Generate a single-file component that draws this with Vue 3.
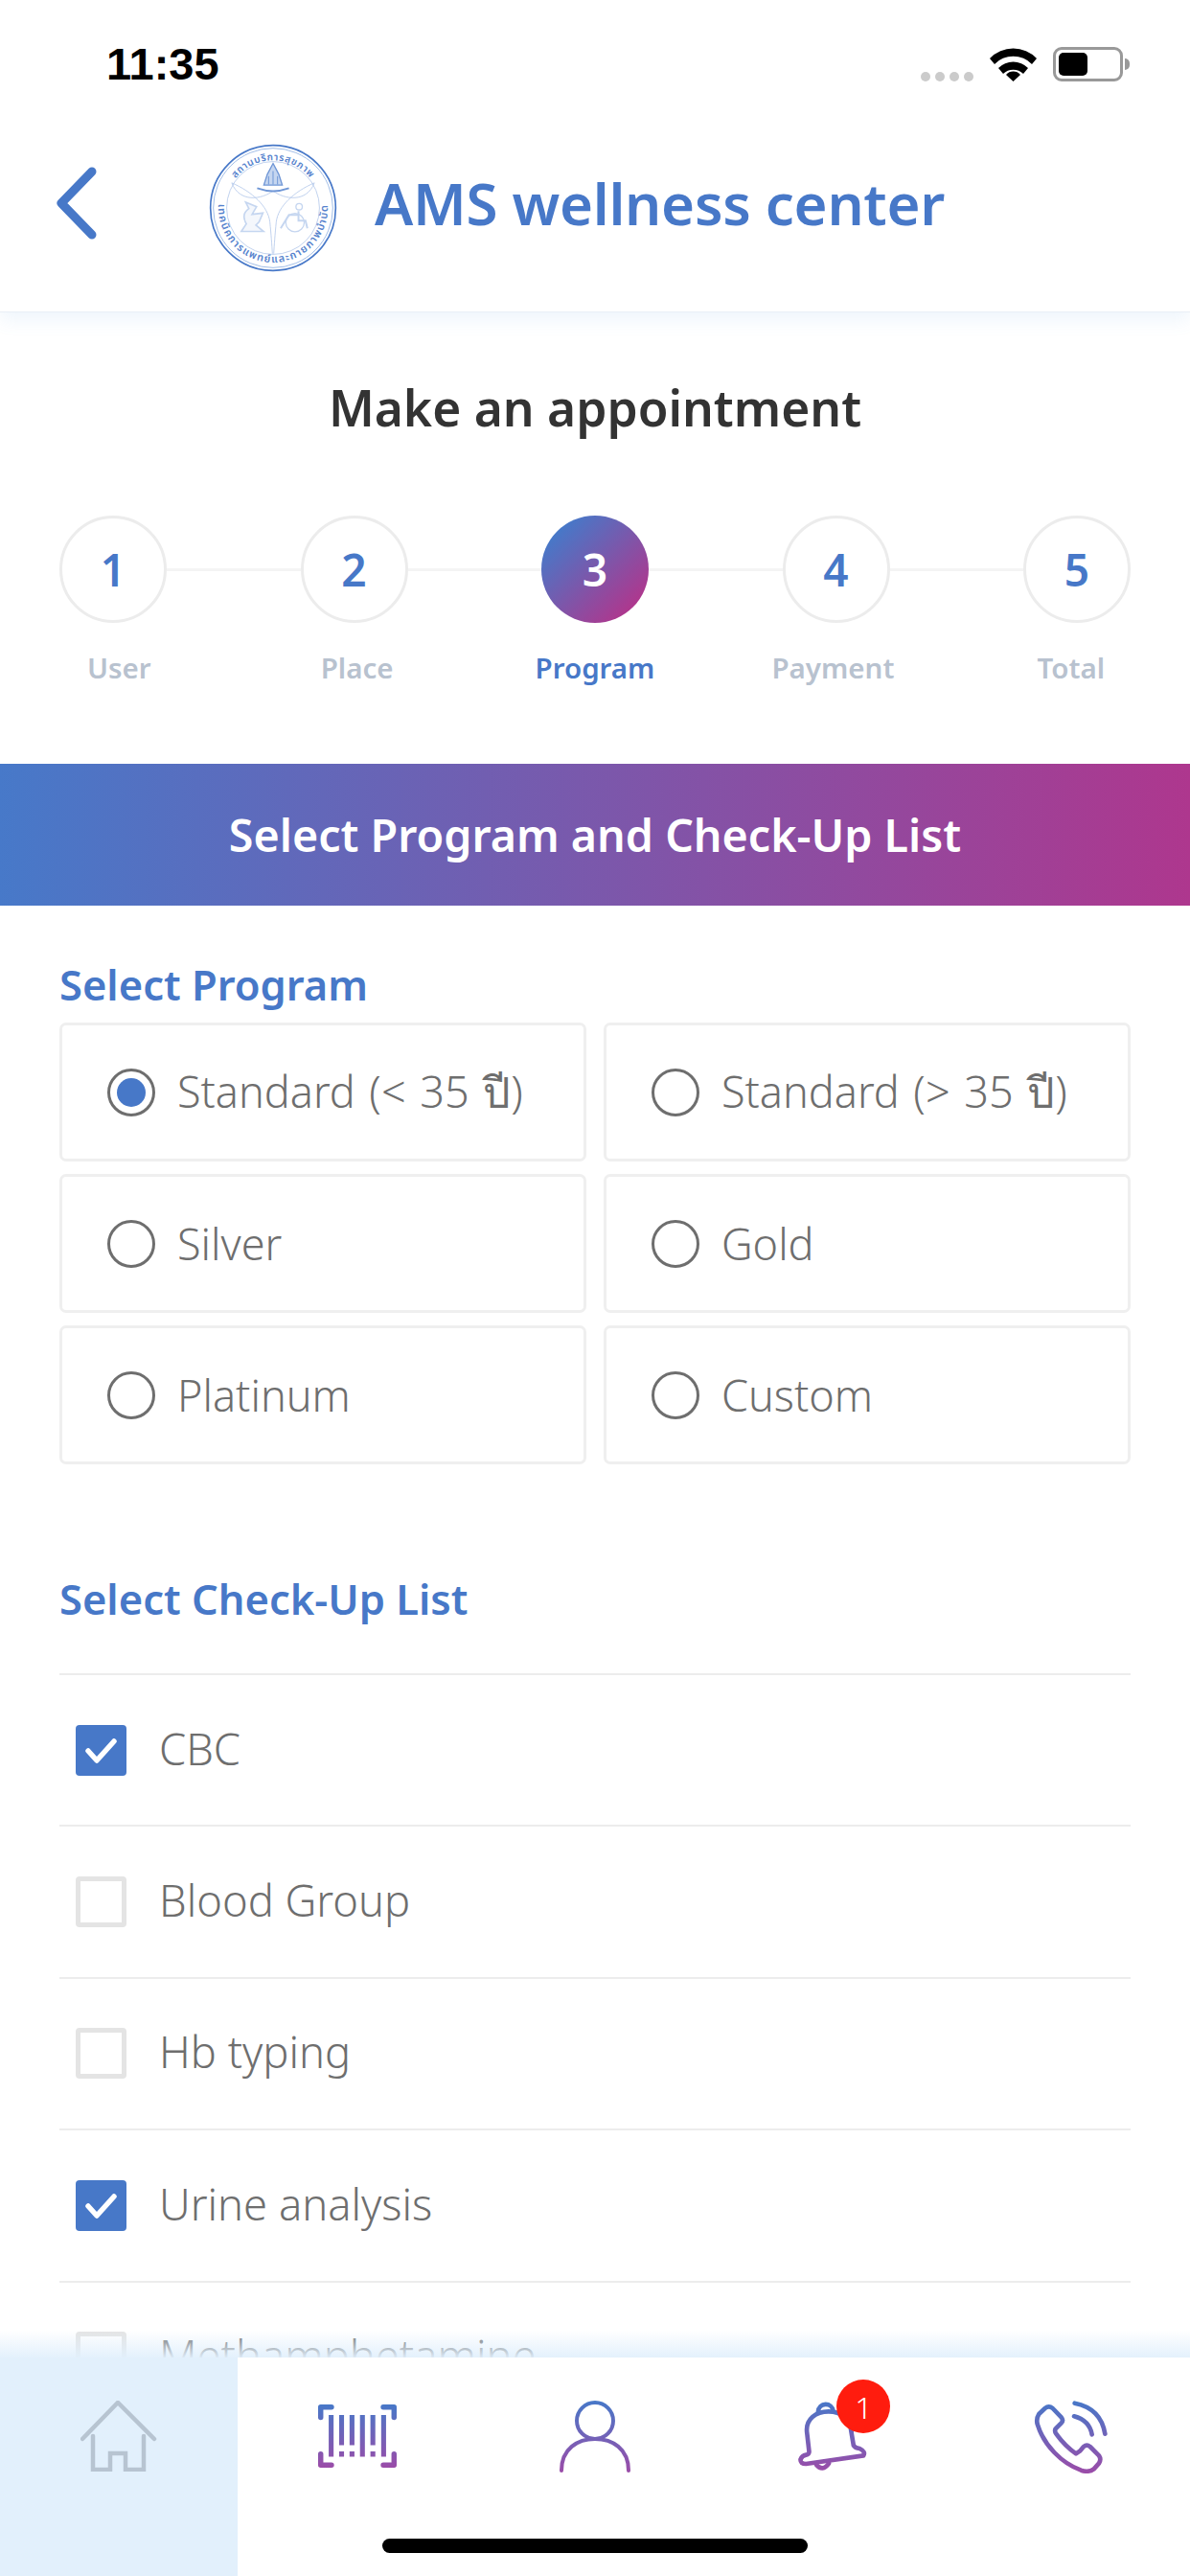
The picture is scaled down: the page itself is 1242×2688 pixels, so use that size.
<template>
  <div class="screen">
    <header class="top">
      <div class="status">
        <span class="time">11:35</span>
        <div class="status-icons">
          <div class="dots"><i v-for="n in 4" :key="n"></i></div>
          <svg class="wifi" width="49" height="36" viewBox="0 0 49 36">
            <path d="M0 12 A34 34 0 0 1 49 12 L44 18 A27 27 0 0 0 5 18Z" fill="#000" />
            <path d="M9 22 A22 22 0 0 1 40 22 L35 28 A15 15 0 0 0 14 28Z" fill="#000" />
            <path d="M17 29 A10 10 0 0 1 32 29 L24.500 36Z" fill="#000" />
          </svg>
          <div class="battery"><b></b></div>
        </div>
      </div>
      <div class="brand">
        <svg class="back" width="44" height="76" viewBox="0 0 44 76">
          <path d="M38 5 L6 38 L38 71" fill="none" stroke="#4778c8" stroke-width="9" stroke-linecap="round" stroke-linejoin="round" />
        </svg>
        <svg class="logo" width="134" height="134" viewBox="114 74 404 404">
          <defs>
            <path id="sealTop" d="M166 276 A150 150 0 0 1 466 276" />
            <path id="sealBottom" d="M154 218 A172 172 0 1 0 478 218" />
          </defs>
          <circle cx="316" cy="276" r="197" fill="#fff" stroke="#4778c8" stroke-width="5" />
          <circle cx="316" cy="276" r="188" fill="none" stroke="#8fb0e2" stroke-width="2.500" />
          <circle cx="316" cy="276" r="146" fill="none" stroke="#b4c9ea" stroke-width="2.500" />
          <text class="seal-text"><textPath href="#sealTop" startOffset="50%" text-anchor="middle">สถานบริการสุขภาพ</textPath></text>
          <text class="seal-text low"><textPath href="#sealBottom" startOffset="50%" text-anchor="middle">เทคนิคการแพทย์และกายภาพบำบัด</textPath></text>
          <g fill="none" stroke="#b4c9ea" stroke-width="2.500">
            <path d="M186 197 C250 225 300 270 306 320 C310 360 312 390 314 420" />
            <path d="M446 197 C382 225 332 270 326 320 C322 360 320 390 318 420" />
            <path d="M186 197 C210 260 280 250 316 222 C352 250 422 260 446 197" />
          </g>
          <path d="M316 136 L334 170 L345 204 H287 L298 170Z" fill="#c5d6f0" stroke="#6f96d6" stroke-width="4" />
          <path d="M302 176 V202 M316 160 V202 M330 176 V202" stroke="#6f96d6" stroke-width="3" />
          <path d="M266 214 Q316 232 366 214" fill="none" stroke="#6f96d6" stroke-width="6" />
          <path d="M230 258 L264 272 L250 296 L284 292 L272 320 L262 330 L286 350 H216 L232 326 Q214 296 240 278Z" fill="#f4f7fc" stroke="#c5d6f0" stroke-width="5" />
          <circle cx="398" cy="272" r="10" fill="none" stroke="#c5d6f0" stroke-width="4" />
          <circle cx="385" cy="322" r="29" fill="none" stroke="#c5d6f0" stroke-width="4" />
          <path d="M396 286 V316 H418 L424 340 M396 298 H366 L340 340" fill="none" stroke="#c5d6f0" stroke-width="6" />
        </svg>
        <span class="brand-name">AMS wellness center</span>
      </div>
    </header>

    <main class="page">
      <h1 class="page-title">Make an appointment</h1>

      <div class="steps">
        <template v-for="(s, i) in steps" :key="s.n">
          <span v-if="i" class="step-line"></span>
          <span class="step-num" :class="{ active: s.n === 3 }">{{ s.n }}</span>
        </template>
      </div>
      <div class="step-labels">
        <span v-for="s in steps" :key="s.n" :class="{ active: s.n === 3 }">{{ s.label }}</span>
      </div>

      <div class="banner">Select Program and Check-Up List</div>

      <h2 class="section-title">Select Program</h2>
      <div class="programs">
        <div v-for="p in programs" :key="p" class="program">
          <span class="radio" :class="{ on: p === selected }"></span>
          <span>{{ p }}</span>
        </div>
      </div>

      <h2 class="section-title list-title">Select Check-Up List</h2>
      <div class="checks">
        <div v-for="c in checks" :key="c.name" class="check-row">
          <span class="box" :class="{ on: c.on }">
            <svg v-if="c.on" width="53" height="53" viewBox="0 0 53 53">
              <path d="M13 27 L22 37 L40 17" fill="none" stroke="#fff" stroke-width="5.500" stroke-linecap="round" stroke-linejoin="round" />
            </svg>
          </span>
          <span class="check-name">{{ c.name }}</span>
        </div>
      </div>
      <div class="fade"></div>
    </main>

    <nav class="tabs">
      <div class="tab home">
        <svg width="80" height="74" viewBox="0 0 80 74">
          <path d="M2 40 L39 2 L77 40 M13 37 V72 H31 V55 H47 V72 H66 V37" fill="none" stroke="#b7c4d1" stroke-width="4.500" stroke-linecap="round" />
        </svg>
      </div>
      <div class="tab">
        <svg class="bar-icon" width="82" height="66" viewBox="97 88 241 194">
          <defs>
            <linearGradient id="gBar" gradientUnits="userSpaceOnUse" x1="0" y1="88" x2="0" y2="282">
              <stop offset="0" stop-color="#4778c8" /><stop offset="1" stop-color="#9b4ca8" />
            </linearGradient>
          </defs>
          <g fill="none" stroke="url(#gBar)" stroke-linecap="round" stroke-linejoin="round">
            <path stroke-width="16" d="M105 128 V96 H138 M297 96 H330 V128 M105 240 V274 H138 M297 274 H330 V240" />
            <path stroke-width="15" stroke-linecap="butt" d="M137 120 V248 M169 120 V213 M169 232 V248 M201 120 V213 M201 232 V248 M233 120 V248 M265 120 V213 M265 232 V248 M298 120 V248" />
          </g>
        </svg>
      </div>
      <div class="tab">
        <svg width="76" height="75" viewBox="0 0 76 75">
          <defs>
            <linearGradient id="gUser" gradientUnits="userSpaceOnUse" x1="0" y1="0" x2="0" y2="75">
              <stop offset="0" stop-color="#4778c8" /><stop offset="1" stop-color="#9b4ca8" />
            </linearGradient>
          </defs>
          <g fill="none" stroke="url(#gUser)" stroke-width="4" stroke-linecap="round">
            <circle cx="38" cy="21" r="19" />
            <path d="M3 73 C3 50 20 40 38 40 C56 40 73 50 73 73" />
          </g>
        </svg>
      </div>
      <div class="tab">
        <div class="bell">
          <svg width="72" height="74" viewBox="160 72 215 222">
            <defs>
              <linearGradient id="gBell" gradientUnits="userSpaceOnUse" x1="0" y1="72" x2="0" y2="294">
                <stop offset="0" stop-color="#4778c8" /><stop offset="1" stop-color="#9b4ca8" />
              </linearGradient>
            </defs>
            <g fill="none" stroke="url(#gBell)" stroke-width="14" stroke-linejoin="round" stroke-linecap="round">
              <path d="M222 108 C224 76 266 76 270 106" />
              <path d="M194 232 L187 170 C183 130 215 106 255 106 C295 106 322 130 326 170 L333 212 Q338 220 352 222 Q372 232 364 244 L184 270 Q166 270 167 256 Q172 244 184 242 Q194 240 194 232Z" />
              <path d="M216 272 Q236 296 256 268" />
            </g>
          </svg>
          <span class="badge">1</span>
        </div>
      </div>
      <div class="tab">
        <svg width="78" height="76" viewBox="898 70 234 228">
          <defs>
            <linearGradient id="gCall" gradientUnits="userSpaceOnUse" x1="0" y1="70" x2="0" y2="298">
              <stop offset="0" stop-color="#4778c8" /><stop offset="1" stop-color="#9b4ca8" />
            </linearGradient>
          </defs>
          <g fill="none" stroke="url(#gCall)" stroke-width="14" stroke-linecap="round" stroke-linejoin="round">
            <path d="M933 94 Q945 84 957 94 L984 122 Q992 132 984 140 L966 158 Q962 166 968 174 Q995 212 1030 236 L1042 228 L1054 214 Q1064 206 1074 214 L1102 242 Q1110 254 1102 266 L1086 284 Q1070 296 1046 288 C985 266 930 210 910 146 Q904 128 914 112Z" />
            <path d="M1024 119 Q1072 132 1080 176" />
            <path d="M1026 78 Q1108 94 1121 174" />
          </g>
        </svg>
      </div>
      <span class="home-bar"></span>
    </nav>
  </div>
</template>

<script setup>
const steps = [
  { n: 1, label: 'User' },
  { n: 2, label: 'Place' },
  { n: 3, label: 'Program' },
  { n: 4, label: 'Payment' },
  { n: 5, label: 'Total' }
]

const selected = 'Standard (< 35 ปี)'
const programs = ['Standard (< 35 ปี)', 'Standard (> 35 ปี)', 'Silver', 'Gold', 'Platinum', 'Custom']

const checks = [
  { name: 'CBC', on: true },
  { name: 'Blood Group', on: false },
  { name: 'Hb typing', on: false },
  { name: 'Urine analysis', on: true },
  { name: 'Methamphetamine', on: false }
]
</script>

<style>
html, body { margin: 0; background: #fff; }
</style>

<style scoped>
.screen {
  width: 1242px;
  height: 2688px;
  display: flex;
  flex-direction: column;
  overflow: hidden;
  background: #fff;
  font-family: "Noto Sans", "Open Sans", sans-serif;
}

/* header */
.top {
  height: 326px;
  flex: none;
  box-sizing: border-box;
  border-bottom: 1px solid #e9eff6;
  box-shadow: 0 8px 18px rgba(90, 160, 230, 0.1);
  position: relative;
  z-index: 1;
  background: #fff;
}
.status {
  height: 106px;
  display: flex;
  justify-content: space-between;
  padding: 45px 70px 0 111px;
  box-sizing: border-box;
}
.time {
  font-family: "Liberation Sans", sans-serif;
  font-size: 47px;
  font-weight: 700;
  line-height: 44px;
  color: #000;
}
.status-icons { display: flex; align-items: flex-start; padding-top: 4px; }
.dots { display: flex; gap: 5px; margin-top: 26px; margin-right: 17px; }
.dots i { width: 10px; height: 10px; border-radius: 50%; background: #cbcbcb; }
.wifi { margin-right: 17px; }
.battery {
  width: 73px;
  height: 36px;
  box-sizing: border-box;
  border: 3px solid #999;
  border-radius: 9px;
  padding: 3px;
  position: relative;
}
.battery b { display: block; width: 30px; height: 24px; border-radius: 5px; background: #000; }
.battery::after {
  content: "";
  position: absolute;
  right: -10px;
  top: 9px;
  width: 5px;
  height: 12px;
  border-radius: 0 6px 6px 0;
  background: #999;
}
.brand { display: flex; align-items: center; padding-left: 58px; height: 222px; margin-top: -6px; }
.back { margin-right: 116px; margin-top: 2px; }
.logo { margin-right: 39px; margin-top: 12px; }
.seal-text { font-family: "Noto Sans Thai", "Noto Sans", sans-serif; font-size: 31px; font-weight: 600; fill: #5582cd; letter-spacing: 2px; }
.seal-text.low { font-size: 33px; letter-spacing: 4px; }
.brand-name { font-size: 60px; font-weight: 600; color: #4778c8; line-height: 1; margin-top: 2px; letter-spacing: -0.300px; }

/* page */
.page { flex: 1; min-height: 0; overflow: hidden; position: relative; }
.page-title {
  margin: 66px 0 0;
  font-size: 51.500px;
  font-weight: 600;
  line-height: 66px;
  color: #333;
  text-align: center;
}
.steps { display: flex; align-items: center; padding: 80px 62px 0; }
.step-num {
  flex: none;
  width: 112px;
  height: 112px;
  box-sizing: border-box;
  border: 3px solid #ececec;
  border-radius: 50%;
  display: flex;
  align-items: center;
  justify-content: center;
  font-size: 46px;
  font-weight: 600;
  color: #4778c8;
}
.step-num.active {
  border: 0;
  color: #fff;
  background: linear-gradient(135deg, #4778c8 15%, #b5338a 90%);
}
.step-line { flex: 1; height: 3px; background: #f4f4f4; }
.step-labels { display: flex; margin-top: 26px; }
.step-labels span {
  flex: 1;
  text-align: center;
  font-size: 29.500px;
  font-weight: 600;
  line-height: 42px;
  color: #b8c2cf;
}
.step-labels span.active { color: #4778c8; }

.banner {
  margin-top: 79px;
  height: 148px;
  display: flex;
  align-items: center;
  justify-content: center;
  font-size: 46.600px;
  font-weight: 600;
  color: #fff;
  background: linear-gradient(90deg, #4779c9, #ae378e);
}

.section-title {
  margin: 56px 62px 0;
  font-size: 43.500px;
  font-weight: 600;
  line-height: 52px;
  color: #4778c8;
}
.programs {
  display: grid;
  grid-template-columns: 550px 550px;
  column-gap: 18px;
  row-gap: 13px;
  margin: 14px 62px 0;
}
.program {
  height: 145px;
  box-sizing: border-box;
  border: 3px solid #efefef;
  border-radius: 7px;
  display: flex;
  align-items: center;
  padding-left: 47px;
  gap: 23px;
  font-size: 45px;
  font-weight: 300;
  word-spacing: 3px;
  color: #6e6e6e;
}
.radio {
  width: 50px;
  height: 50px;
  flex: none;
  box-sizing: border-box;
  border: 3px solid #6e6e6e;
  border-radius: 50%;
  display: flex;
  align-items: center;
  justify-content: center;
}
.radio.on::after {
  content: "";
  width: 30px;
  height: 30px;
  border-radius: 50%;
  background: #4778c8;
}
.list-title { margin-top: 114px; }
.checks { margin: 52px 62px 0; }
.check-row {
  height: 158.400px;
  box-sizing: border-box;
  border-top: 2px solid #ececec;
  display: flex;
  align-items: center;
  padding-left: 17px;
  gap: 34px;
  font-size: 45.300px;
  font-weight: 300;
  color: #6e6e6e;
}
.check-name { margin-top: -4px; }
.box {
  width: 53px;
  height: 53px;
  flex: none;
  box-sizing: border-box;
  border: 5px solid #e4e4e4;
  border-radius: 4px;
}
.box.on { border: 0; background: #4778c8; }
.box svg { display: block; }
.fade {
  position: absolute;
  left: 0;
  right: 0;
  bottom: 0;
  height: 28px;
  background: linear-gradient(rgba(226, 240, 252, 0), rgba(226, 240, 252, 0.95));
}

/* bottom tabs */
.tabs { height: 228px; flex: none; display: flex; position: relative; background: #fff; }
.tab { flex: 1; display: flex; justify-content: center; padding-top: 45px; box-sizing: border-box; align-items: flex-start; }
.tab svg { display: block; }
.tab .bar-icon { margin-top: 4px; }
.tab.home { background: #e2f0fc; }
.bell { position: relative; }
.badge {
  position: absolute;
  left: 40px;
  top: -22px;
  width: 56px;
  height: 56px;
  border-radius: 50%;
  background: #ff1c0e;
  color: #fff;
  font-size: 32px;
  font-weight: 300;
  display: flex;
  align-items: center;
  justify-content: center;
}
.home-bar {
  position: absolute;
  left: 399px;
  bottom: 24px;
  width: 444px;
  height: 15px;
  border-radius: 8px;
  background: #000;
}
</style>
